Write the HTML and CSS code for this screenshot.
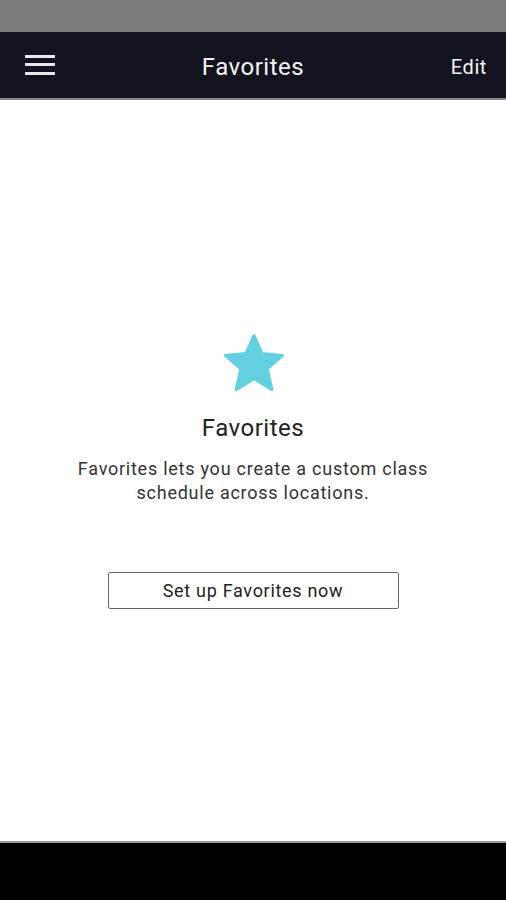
FILE: index.html
```html
<!DOCTYPE html>
<html>
<head>
<meta charset="utf-8">
<link rel="stylesheet" href="styles.css">
</head>
<body>
<div class="screen">
  <div class="statusbar"></div>
  <header class="appbar">
    <div class="menu" aria-label="Menu"><span></span><span></span><span></span></div>
    <h1 class="title">Favorites</h1>
    <div class="edit">Edit</div>
  </header>
  <main class="content">
    <svg class="star" width="64" height="62" viewBox="0 0 64 62">
      <path d="M32 2.5 L40.2 20.6 L60.6 22.4 L45.2 35.8 L49.9 56.6 L32 45.6 L14.1 56.6 L18.8 35.8 L3.4 22.4 L23.8 20.6 Z" fill="#62d0e0" stroke="#62d0e0" stroke-width="3" stroke-linejoin="round"/>
    </svg>
    <h2 class="heading">Favorites</h2>
    <p class="desc">Favorites lets you create a custom class<br>schedule across locations.</p>
    <button class="setup">Set up Favorites now</button>
  </main>
  <div class="navbar"></div>
</div>
</body>
</html>
```
FILE: styles.css
```css
* { box-sizing: border-box; }
html, body { margin: 0; padding: 0; }
body {
  width: 506px;
  height: 900px;
  font-family: Roboto, "Noto Sans", sans-serif;
  background: #fff;
  overflow: hidden;
}
.screen {
  display: flex;
  flex-direction: column;
  height: 900px;
}
.statusbar {
  height: 32px;
  background: #7b7b7b;
  flex: none;
}
.appbar {
  height: 68px;
  flex: none;
  background: #12131f;
  border-bottom: 2px solid #8a8a8a;
  display: flex;
  align-items: center;
  justify-content: space-between;
  padding: 0 19px 0 25px;
  position: relative;
}
.menu {
  width: 30px;
  display: flex;
  flex-direction: column;
  gap: 5.5px;
  margin-top: -1px;
}
.menu span {
  display: block;
  height: 3px;
  background: #e8e8e8;
}
.title {
  position: absolute;
  left: 0;
  right: 0;
  text-align: center;
  margin: 3px 0 0;
  font-size: 24px;
  letter-spacing: 0.5px;
  font-weight: 400;
  color: #f4f4f4;
  pointer-events: none;
}
.edit {
  font-size: 20px;
  letter-spacing: 0.6px;
  color: #f4f4f4;
  margin-top: 3px;
}
.content {
  flex: 1;
  display: flex;
  flex-direction: column;
  align-items: center;
  padding-top: 233px;
}
.star {
  display: block;
  margin-left: 1px;
}
.heading {
  margin: 18px 0 0;
  font-size: 24px;
  letter-spacing: 0.5px;
  font-weight: 400;
  color: #222;
  line-height: 30px;
}
.desc {
  margin: 14px 0 0;
  font-size: 18px;
  letter-spacing: 0.75px;
  line-height: 24px;
  color: #333;
  text-align: center;
}
.setup {
  margin-top: 67px;
  width: 291px;
  height: 37px;
  background: #fff;
  border: 1px solid #666;
  border-radius: 2px;
  font-family: Roboto, "Noto Sans", sans-serif;
  font-size: 18px;
  letter-spacing: 0.7px;
  color: #222;
  padding: 0;
}
.navbar {
  height: 59px;
  flex: none;
  background: #000;
  border-top: 2px solid #9a9a9a;
}
```
